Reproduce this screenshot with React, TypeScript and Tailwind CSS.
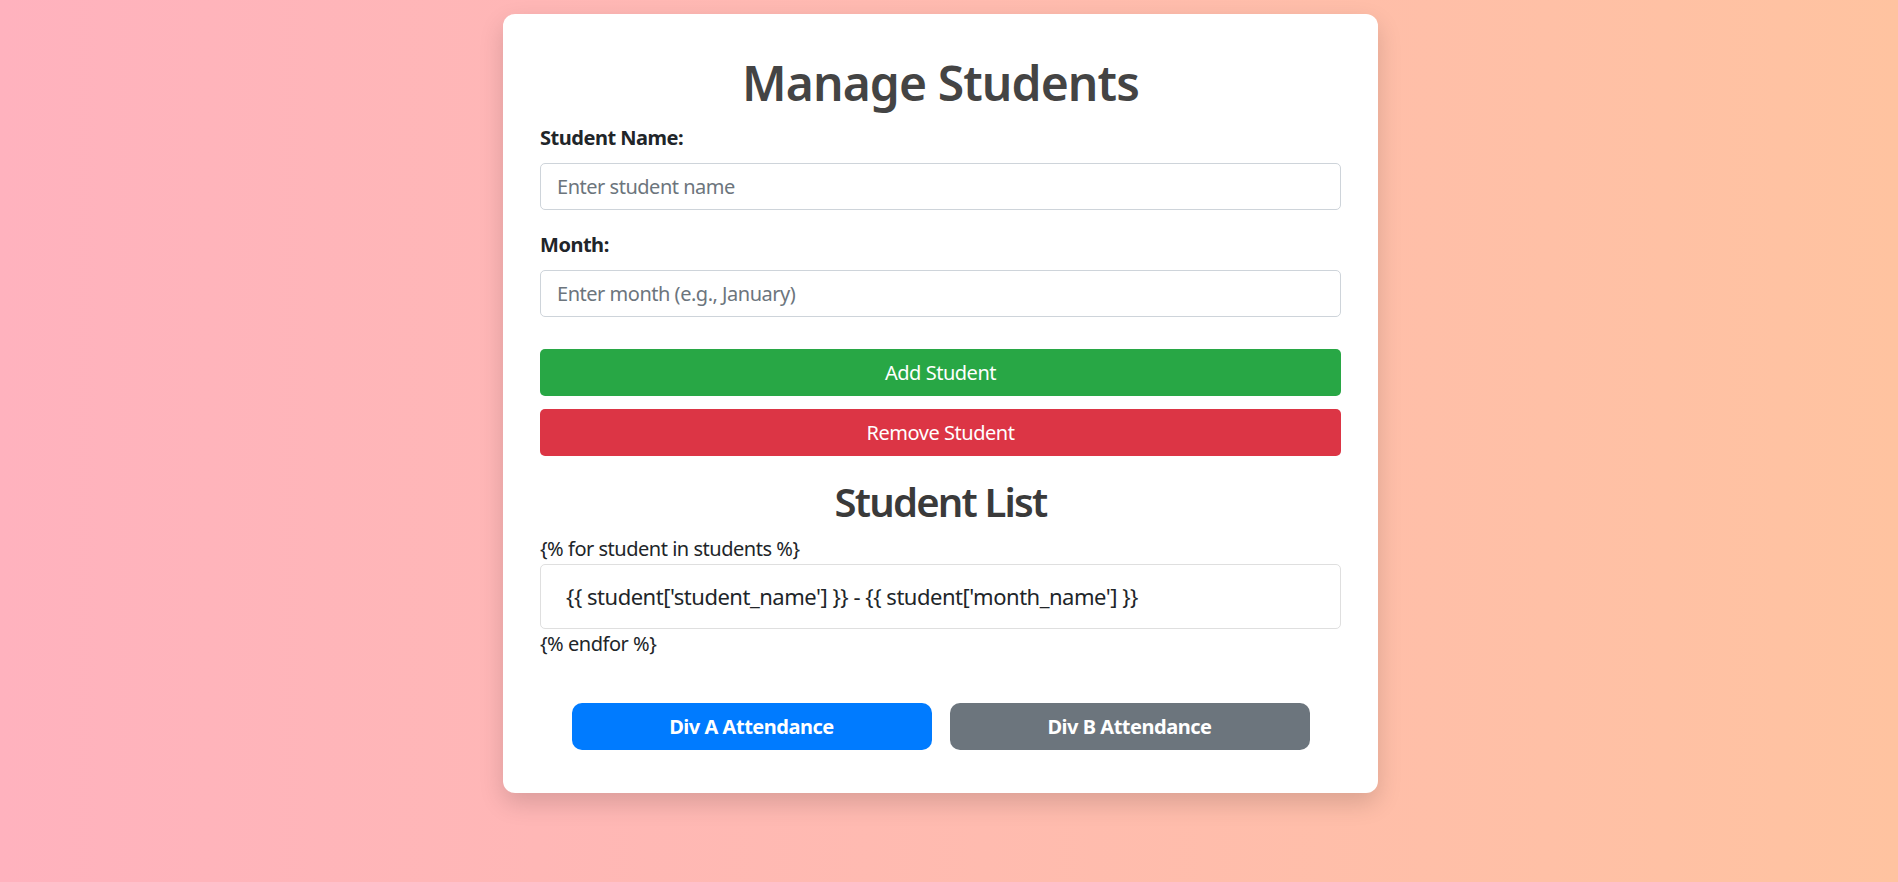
import React from 'react';

const font = { fontFamily: '"Noto Sans", "Open Sans", sans-serif' };

export default function App() {
  return (
    <div
      className="flex min-h-[882px] w-full justify-center bg-gradient-to-r from-[#ffb2be] to-[#ffc3a0] pt-[14px] pr-[17px] tracking-[-0.03em]"
      style={font}
    >
      <div className="h-fit w-[875px] rounded-[12px] bg-white px-[37px] pt-[39px] pb-[43px] shadow-[0_10px_25px_rgba(0,0,0,0.15)]">
        {/* Header */}
        <h1 className="mb-[10px] text-center text-[48px] font-semibold leading-[60px] tracking-[-0.9px] text-[#444]">
          Manage Students
        </h1>

        {/* Form */}
        <div className="mb-[20px]">
          <label className="mb-[10px] block text-[20px] font-bold leading-[1.5] text-[#212529]">
            Student Name:
          </label>
          <input
            type="text"
            placeholder="Enter student name"
            className="block h-[47px] w-full rounded-[5px] border border-[#ced4da] px-[16px] text-[20px] text-[#495057] placeholder:text-[#6c757d] focus:outline-none"
          />
        </div>
        <div className="mb-[20px]">
          <label className="mb-[10px] block text-[20px] font-bold leading-[1.5] text-[#212529]">
            Month:
          </label>
          <input
            type="text"
            placeholder="Enter month (e.g., January)"
            className="block h-[47px] w-full rounded-[5px] border border-[#ced4da] px-[16px] text-[20px] text-[#495057] placeholder:text-[#6c757d] focus:outline-none"
          />
        </div>

        <div className="mt-[32px] flex flex-col gap-[13px]">
          <button className="h-[47px] w-full rounded-[5px] bg-[#28a745] text-[20px] text-white">
            Add Student
          </button>
          <button className="h-[47px] w-full rounded-[5px] bg-[#dc3545] text-[20px] text-white">
            Remove Student
          </button>
        </div>

        {/* List */}
        <h2 className="mt-[22px] mb-[8px] text-center text-[40px] font-semibold leading-[1.2] tracking-[-0.045em] text-[#3a3a3a]">
          Student List
        </h2>
        <div className="text-[20px] leading-[1.5] text-[#212529]">{"{% for student in students %}"}</div>
        <ul>
          <li className="rounded-[5px] border border-[#dfdfdf] px-[25px] py-[15px] text-[22px] leading-[1.5] text-[#212529]">
            {"{{ student['student_name'] }} - {{ student['month_name'] }}"}
          </li>
        </ul>
        <div className="text-[20px] leading-[1.5] text-[#212529]">{"{% endfor %}"}</div>

        {/* Attendance links */}
        <div className="mt-[44px] flex justify-center gap-[18px]">
          <button className="h-[47px] w-[360px] rounded-[10px] bg-[#007bff] text-[20px] font-bold text-white">
            Div A Attendance
          </button>
          <button className="h-[47px] w-[360px] rounded-[10px] bg-[#6c757d] text-[20px] font-bold text-white">
            Div B Attendance
          </button>
        </div>
      </div>
    </div>
  );
}
